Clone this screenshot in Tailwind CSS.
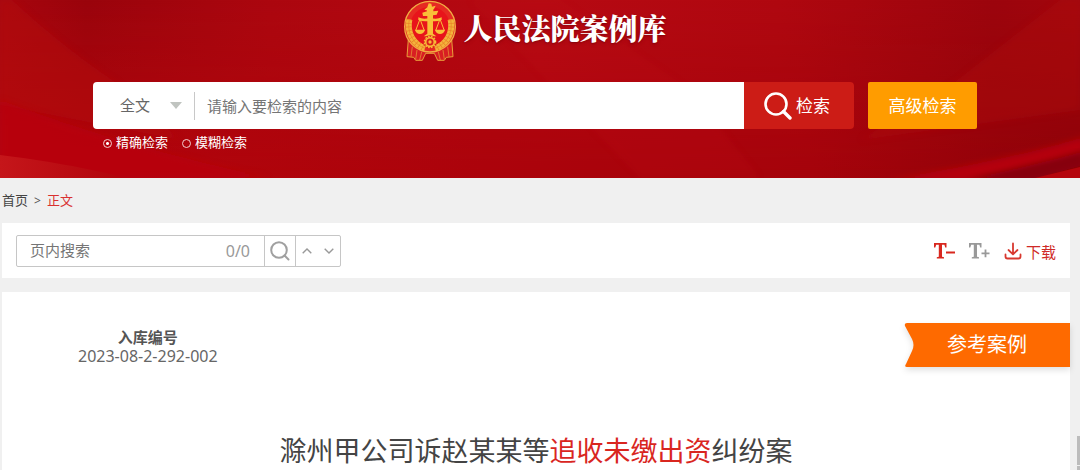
<!DOCTYPE html>
<html lang="zh-CN">
<head>
<meta charset="utf-8">
<meta name="viewport" content="width=device-width, initial-scale=1">
<title>人民法院案例库</title>
<script src="https://cdn.jsdelivr.net/npm/@tailwindcss/browser@4"></script>
</head>
<body class="flex min-h-screen flex-col bg-[#f0f0f0] font-['Noto_Sans','Noto_Sans_CJK_SC',sans-serif] text-[#555]">

<header class="relative isolate overflow-hidden bg-[#b0040d] pr-2.5 pb-[25px]">
  <svg class="absolute inset-0 -z-10 h-full w-full" viewBox="0 0 1080 178" preserveAspectRatio="none" aria-hidden="true">
    <defs>
      <linearGradient id="base" x1="0" y1="0" x2="1" y2="0">
        <stop offset="0" stop-color="#a8060e"/><stop offset=".08" stop-color="#9a040c"/><stop offset=".25" stop-color="#ac070f"/>
        <stop offset=".5" stop-color="#b70a13"/><stop offset=".72" stop-color="#b00810"/><stop offset=".92" stop-color="#9c050d"/><stop offset="1" stop-color="#a3060d"/>
      </linearGradient>
      <linearGradient id="lower" x1="0" y1="0" x2="1" y2="0">
        <stop offset="0" stop-color="#b5050c"/><stop offset=".45" stop-color="#ab030b"/><stop offset=".75" stop-color="#a5030b"/><stop offset="1" stop-color="#8d0108"/>
      </linearGradient>
      <linearGradient id="fade" x1="0" y1="0" x2="0" y2="1">
        <stop offset="0" stop-color="#fff" stop-opacity="0"/><stop offset="1" stop-color="#fff"/>
      </linearGradient>
      <mask id="down"><rect width="1080" height="178" fill="url(#fade)"/></mask>
      <linearGradient id="corner" x1="0" y1="1" x2="1" y2="1">
        <stop offset="0" stop-color="#c5161a"/><stop offset="1" stop-color="#b1040c"/>
      </linearGradient>
      <filter id="soft"><feGaussianBlur stdDeviation="3"/></filter>
    </defs>
    <rect width="1080" height="178" fill="url(#base)"/>
    <rect width="1080" height="178" fill="url(#lower)" mask="url(#down)"/>
    <path d="M0 0H12C45 30 75 55 118 84L180 140L0 105Z" fill="#b3080f" opacity=".5" filter="url(#soft)"/>
    <path d="M470 0H560L690 90L760 178H640Z" fill="#bd0e17" opacity=".2" filter="url(#soft)"/>
    <path d="M1060 0L955 82L860 140L1080 110V0Z" fill="#ae0a11" opacity=".4" filter="url(#soft)"/>
    <path d="M0 100C60 122 140 150 270 178H0Z" fill="#b9040c" opacity=".8" filter="url(#soft)"/>
    <path d="M0 155C40 160 90 168 125 178H0Z" fill="url(#corner)"/>
    <path d="M890 180C960 168 1030 154 1084 137V156L975 180Z" fill="#b5040d" filter="url(#soft)"/>
    <path d="M965 180C1010 170 1050 161 1084 151V165L1030 180Z" fill="#860309" filter="url(#soft)"/>
    <path d="M1035 178L1080 167V178Z" fill="#b5050d"/>
  </svg>

  <div class="flex h-[62px] items-start justify-center gap-1.5">
    <svg class="h-[62px] w-[54px]" viewBox="22 0 162 186" role="img" aria-label="人民法院徽标">
      <g stroke="#e9a13a" stroke-width="3" stroke-linejoin="round" fill="#d81e22">
        <path d="M38 118L34 170L54 172L60 181L80 181L90 160H116L126 181L146 181L152 172L172 170L168 118Z"/>
        <path d="M50 140L46 170M64 150L60 178M78 156L72 180M156 140L160 170M142 150L146 178M128 156L134 180" stroke-width="2"/>
      </g>
      <circle cx="103" cy="80" r="76" fill="#e62a22" stroke="#f1ad43" stroke-width="4"/>
      <circle cx="103" cy="80" r="60" fill="#e8141b"/>
      <g fill="none">
        <path d="M41 58C33 98 52 132 88 145M165 58C173 98 154 132 118 145" stroke="#f4b33b" stroke-width="18"/>
        <path d="M41 58C33 98 52 132 88 145M165 58C173 98 154 132 118 145" stroke="#e98026" stroke-width="18" stroke-dasharray="2 9"/>
        <path d="M41 58C33 98 52 132 88 145M165 58C173 98 154 132 118 145" stroke="#e98026" stroke-width="2"/>
      </g>
      <g fill="#f9bf38">
        <path d="M99 10L107 11L109 20L120 17L115 27L109 32H97L86 29L95 22Z"/>
        <path d="M80 38L94 34V29H113V34L128 32L123 44L112 46V101L122 109H84L95 101V48L82 48Z"/>
        <path d="M68 52Q84 60 103 53Q122 60 138 52V60Q120 67 103 62Q86 67 68 60Z"/>
        <path d="M58 89H88Q84 102 73 102Q62 102 58 89ZM118 89H148Q144 102 133 102Q122 102 118 89Z"/>
      </g>
      <path d="M73 57L60 92M73 57L86 92M133 57L120 92M133 57L146 92" stroke="#f9bf38" stroke-width="3"/>
      <circle cx="103" cy="126" r="20" fill="#d9201d"/>
      <circle cx="103" cy="126" r="13" fill="none" stroke="#f9b936" stroke-width="5"/>
      <circle cx="103" cy="126" r="17" fill="none" stroke="#f9b936" stroke-width="4" stroke-dasharray="5 4"/>
      <circle cx="103" cy="126" r="5" fill="#f9b936"/>
    </svg>
    <h1 class="pt-2 font-['Noto_Serif_CJK_SC','Noto_Sans_CJK_SC',serif] text-[29px] leading-10 font-black text-white text-shadow-md">人民法院案例库</h1>
  </div>

  <form class="mx-auto mt-5 w-[82.6%]">
    <div class="flex h-[47px] items-stretch">
      <div class="flex min-w-0 flex-1 items-center rounded-l-sm bg-white">
        <div class="relative flex h-7 w-[102px] shrink-0 items-center border-r border-[#c8c8c8]">
          <select aria-label="检索范围" class="h-7 w-full appearance-none bg-transparent pl-[27px] text-[15px] text-[#666] outline-none"><option>全文</option></select>
          <svg class="pointer-events-none absolute right-3 h-[7px] w-3" viewBox="0 0 12 7" aria-hidden="true"><path d="M0 0H12L6 7Z" fill="#c0c4c0"/></svg>
        </div>
        <input type="text" aria-label="检索内容" placeholder="请输入要检索的内容" class="h-full min-w-0 flex-1 bg-transparent px-3 text-[15px] outline-none placeholder:text-[#757575]">
      </div>
      <button type="button" class="flex w-[110px] items-center justify-center gap-1 rounded-r-sm bg-[#cc1c16] pr-1 text-[17px] text-white">
        <svg class="size-7" viewBox="0 0 28 28" fill="none" stroke="#fff" aria-hidden="true"><circle cx="12" cy="12" r="10.5" stroke-width="2.6"/><path d="M19.5 19.5L26 26" stroke-width="3.4" stroke-linecap="round"/></svg>
        检索
      </button>
      <button type="button" class="ml-3.5 w-[109px] rounded-xs bg-[#ff9c00] text-[17px] text-white">高级检索</button>
    </div>
    <div class="mt-1 flex h-5 items-center gap-3.5 pl-2.5 text-[13px] text-white">
      <label class="flex items-center gap-1"><input type="radio" name="mode" checked class="size-[9px] appearance-none rounded-full border border-[#f3cfcf] checked:bg-[radial-gradient(circle,#fff_1px,transparent_2px)]">精确检索</label>
      <label class="flex items-center gap-1"><input type="radio" name="mode" class="size-[9px] appearance-none rounded-full border border-[#f3cfcf] checked:bg-[radial-gradient(circle,#fff_1px,transparent_2px)]">模糊检索</label>
    </div>
  </form>
</header>

<nav aria-label="面包屑" class="flex h-[45px] items-center gap-1.5 pl-0.5 text-[13px]">
  <a href="#" class="text-[#444]">首页</a><span class="text-xs">&gt;</span><a href="#" class="text-[#d93030]">正文</a>
</nav>

<main class="mr-2.5 ml-0.5 flex flex-1 flex-col gap-3.5">
  <section class="flex h-[55px] items-center justify-between bg-white px-3.5">
    <div class="flex h-8 w-[325px] items-stretch rounded-xs border border-[#c6c6c6] text-[15px]">
      <input type="text" aria-label="页内搜索" placeholder="页内搜索" class="min-w-0 flex-1 bg-transparent pl-[13px] outline-none placeholder:text-[#757575]">
      <span class="self-center pr-3.5 text-base text-[#999]">0/0</span>
      <button type="button" aria-label="搜索" class="flex w-8 items-center justify-center border-x border-[#c6c6c6]">
        <svg class="size-5" viewBox="0 0 20 20" fill="none" stroke="#a0a0a0" stroke-width="2" stroke-linecap="round"><circle cx="9" cy="9" r="7.8"/><path d="M14.5 14.5L18.5 18.5"/></svg>
      </button>
      <button type="button" aria-label="上一个" class="flex w-[22px] items-center justify-center"><svg class="h-[6px] w-[10px]" viewBox="0 0 10 6" fill="none" stroke="#999" stroke-width="1.4"><path d="M.7 5.3L5 1L9.3 5.3"/></svg></button>
      <button type="button" aria-label="下一个" class="flex w-[22px] items-center justify-center"><svg class="h-[6px] w-[10px]" viewBox="0 0 10 6" fill="none" stroke="#999" stroke-width="1.4"><path d="M.7 .7L5 5L9.3 .7"/></svg></button>
    </div>
    <div class="flex items-center gap-3.5 text-[15px] text-[#cf2a27]">
      <button type="button" aria-label="缩小字号" class="text-[#d8281f]"><svg class="h-5 w-[21px]" viewBox="0 0 21 20" fill="currentColor" aria-hidden="true"><path d="M0 2H12.500V6.500H11.200L10.400 3.700H8V15.800L10 16.300V17.500H2.800V16.300L4.800 15.800V3.700H2.200L1.300 6.500H0ZM12 10.500H21V12.500H12Z"/></svg></button>
      <button type="button" aria-label="放大字号" class="text-[#999]"><svg class="h-5 w-[21px]" viewBox="0 0 21 20" fill="currentColor" aria-hidden="true"><path d="M0 2H12.500V6.500H11.200L10.400 3.700H8V15.800L10 16.300V17.500H2.800V16.300L4.800 15.800V3.700H2.200L1.300 6.500H0ZM12.500 11.500H15.600V8.500H17.400V11.500H20.500V13.300H17.400V16.300H15.600V13.300H12.500Z"/></svg></button>
      <button type="button" class="flex items-center gap-1"><svg class="size-[18px]" viewBox="0 0 18 18" fill="none" stroke="#d8382f" stroke-width="1.8" stroke-linecap="round" stroke-linejoin="round" aria-hidden="true"><path d="M9 1.500V12M4.500 8L9 12.300L13.500 8M1.500 12.500V14.500Q1.500 16.500 3.500 16.500H14.500Q16.500 16.500 16.500 14.500V12.500"/></svg><span class="pt-1">下载</span></button>
    </div>
  </section>

  <article class="flex-1 bg-white pt-[30px]">
    <div class="flex items-start justify-between pl-[76px]">
      <div class="pt-1 text-center text-[#666]">
        <p class="text-[15px] leading-[22px] font-bold text-[#555]">入库编号</p>
        <p class="text-base leading-4">2023-08-2-292-002</p>
      </div>
      <div class="relative isolate flex h-[45px] w-[166px] items-center justify-center text-xl text-white">
        <svg class="absolute inset-0 -z-10 h-full w-full overflow-visible drop-shadow-md" viewBox="0 0 166 45" preserveAspectRatio="none" aria-hidden="true"><path d="M3 1H166V45H3Q0 45 2 42L8 29Q11 23 8 17L1 4Q0 1 3 1Z" fill="#fe6a00"/></svg>
        参考案例
      </div>
    </div>
    <h2 class="mt-16 text-center text-[27px] leading-10 text-[#444]">滁州甲公司诉赵某某等<span class="text-[#d9261f]">追收未缴出资</span>纠纷案</h2>
  </article>
</main>

<div class="absolute right-0 bottom-0 flex h-[34px] w-[3px] flex-col gap-px" aria-hidden="true"><span class="flex-1 bg-[#bcbcbc]"></span><span class="h-1 bg-[#bcbcbc]"></span></div>
</body>
</html>
